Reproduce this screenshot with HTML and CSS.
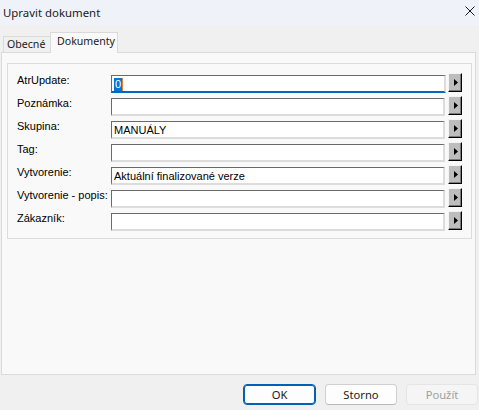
FILE: index.html
```html
<!DOCTYPE html>
<html>
<head>
<meta charset="utf-8">
<link rel="stylesheet" href="styles.css">
</head>
<body>
<div class="window">
  <div class="titlebar">
    <span class="title">Upravit dokument</span>
    <svg class="close" width="10" height="10" viewBox="0 0 10 10"><path d="M0.5 0.5 L9.5 9.5 M9.5 0.5 L0.5 9.5" stroke="#1a1a1a" stroke-width="1"/></svg>
  </div>
  <div class="tabs">
    <div class="tab">Obecné</div>
    <div class="tab active">Dokumenty</div>
  </div>
  <div class="panel">
    <div class="group">
      <div class="row">
        <label class="lbl">AtrUpdate:</label>
        <div class="inp focused"><span class="sel">0</span></div>
        <div class="btn"><svg width="4" height="7" viewBox="0 0 4 7"><polygon points="0,0 4,3.5 0,7" fill="#000"/></svg></div>
      </div>
      <div class="row">
        <label class="lbl">Poznámka:</label>
        <div class="inp"></div>
        <div class="btn"><svg width="4" height="7" viewBox="0 0 4 7"><polygon points="0,0 4,3.5 0,7" fill="#000"/></svg></div>
      </div>
      <div class="row">
        <label class="lbl">Skupina:</label>
        <div class="inp">MANUÁLY</div>
        <div class="btn"><svg width="4" height="7" viewBox="0 0 4 7"><polygon points="0,0 4,3.5 0,7" fill="#000"/></svg></div>
      </div>
      <div class="row">
        <label class="lbl">Tag:</label>
        <div class="inp"></div>
        <div class="btn"><svg width="4" height="7" viewBox="0 0 4 7"><polygon points="0,0 4,3.5 0,7" fill="#000"/></svg></div>
      </div>
      <div class="row">
        <label class="lbl">Vytvorenie:</label>
        <div class="inp">Aktuální finalizované verze</div>
        <div class="btn"><svg width="4" height="7" viewBox="0 0 4 7"><polygon points="0,0 4,3.5 0,7" fill="#000"/></svg></div>
      </div>
      <div class="row">
        <label class="lbl">Vytvorenie - popis:</label>
        <div class="inp"></div>
        <div class="btn"><svg width="4" height="7" viewBox="0 0 4 7"><polygon points="0,0 4,3.5 0,7" fill="#000"/></svg></div>
      </div>
      <div class="row">
        <label class="lbl">Zákazník:</label>
        <div class="inp"></div>
        <div class="btn"><svg width="4" height="7" viewBox="0 0 4 7"><polygon points="0,0 4,3.5 0,7" fill="#000"/></svg></div>
      </div>
    </div>
  </div>
  <div class="footer">
    <button class="dlgbtn default">OK</button>
    <button class="dlgbtn">Storno</button>
    <button class="dlgbtn disabled">Použít</button>
  </div>
</div>
</body>
</html>
```
FILE: styles.css
```css
* { box-sizing: border-box; }
html, body { margin: 0; padding: 0; }
body {
  width: 479px;
  height: 410px;
  overflow: hidden;
  background: #f0f0f0;
  font-family: "Noto Sans", "Open Sans", sans-serif;
  color: #000;
}
.window { width: 479px; height: 410px; display: flex; flex-direction: column; }
.titlebar {
  height: 25px;
  background: #eff3f9;
  display: flex;
  align-items: center;
  justify-content: space-between;
  padding: 0 4px 1px 3px;
}
.title { font-size: 11.4px; color: #1a1a1a; }
.close { display: block; margin-top: -2px; }
.tabs {
  height: 27px;
  display: flex;
  align-items: flex-end;
  padding-left: 3px;
}
.tab {
  font-size: 10.6px;
  height: 16px;
  line-height: 15px;
  padding: 0 0 0 3px;
  width: 47px;
  border: 1px solid #dadada;
  border-bottom: none;
  border-right: none;
  background: #f0f0f0;
  color: #1a1a1a;
  white-space: nowrap;
  overflow: hidden;
}
.tab.active {
  width: 68px;
  height: 21px;
  line-height: 17px;
  padding-left: 6px;
  background: #f9f9f9;
  border-right: 1px solid #dadada;
  margin-bottom: -1px;
  position: relative;
  z-index: 1;
}
.panel {
  margin-left: 1px;
  width: 475px;
  height: 323px;
  background: #f9f9f9;
  border: 1px solid #dadada;
  padding: 10px 0 0 5px;
}
.group {
  width: 465px;
  height: 176px;
  border: 1px solid #dcdcdc;
  padding: 9px 9px 0 9px;
  display: flex;
  flex-direction: column;
}
.row {
  height: 23px;
  display: grid;
  grid-template-columns: 91px 334px 14px;
  column-gap: 3px;
  align-items: start;
}
.lbl {
  font-family: "Liberation Sans", Arial, sans-serif;
  font-size: 11px;
  line-height: 13px;
  margin-top: 1px;
  color: #000;
  white-space: nowrap;
}
.inp {
  margin-top: 2px;
  height: 18px;
  background: #fff;
  border-top: 1px solid #6a6a6a;
  border-left: 1px solid #6a6a6a;
  border-right: 2px solid #dcdcdc;
  border-bottom: 2px solid #dcdcdc;
  font-family: "Liberation Sans", Arial, sans-serif;
  font-size: 11px;
  line-height: 14px;
  padding: 1px 0 0 2px;
  white-space: nowrap;
  overflow: hidden;
}
.inp.focused {
  border-bottom: 2px solid #0067c0;
  margin-right: -1px;
}
.sel {
  display: inline-block;
  background: #0078d7;
  color: #fff;
  padding: 0 1px;
  line-height: 13px;
  border-right: 1px solid #e08030;
}
.btn {
  width: 14px;
  height: 19px;
  background: #bdbdbd;
  border-top: 1px solid #f4f4f4;
  border-left: 1px solid #f4f4f4;
  border-right: 1px solid #000;
  border-bottom: 1px solid #000;
  box-shadow: inset -1px -1px 0 #7a7a7a;
  display: flex;
  align-items: center;
  justify-content: center;
  padding-left: 1px;
}
.btn svg { display: block; }
.footer {
  display: flex;
  justify-content: flex-end;
  gap: 9px;
  padding: 9px 1px 0 0;
}
.dlgbtn {
  font-family: "Noto Sans", "Open Sans", sans-serif;
  font-size: 11.2px;
  height: 21px;
  width: 72px;
  padding: 0;
  background: #fdfdfd;
  border: 1px solid #d0d0d0;
  border-bottom-color: #b8b8b8;
  border-radius: 4px;
  color: #1a1a1a;
  line-height: 18px;
}
.dlgbtn.default {
  width: 73px;
  border: 1px solid #005fb8;
  box-shadow: inset 0 0 0 1px #005fb8;
}
.dlgbtn.disabled {
  background: #f5f5f5;
  border: 1px solid #e5e5e5;
  color: #a0a0a0;
}
```
